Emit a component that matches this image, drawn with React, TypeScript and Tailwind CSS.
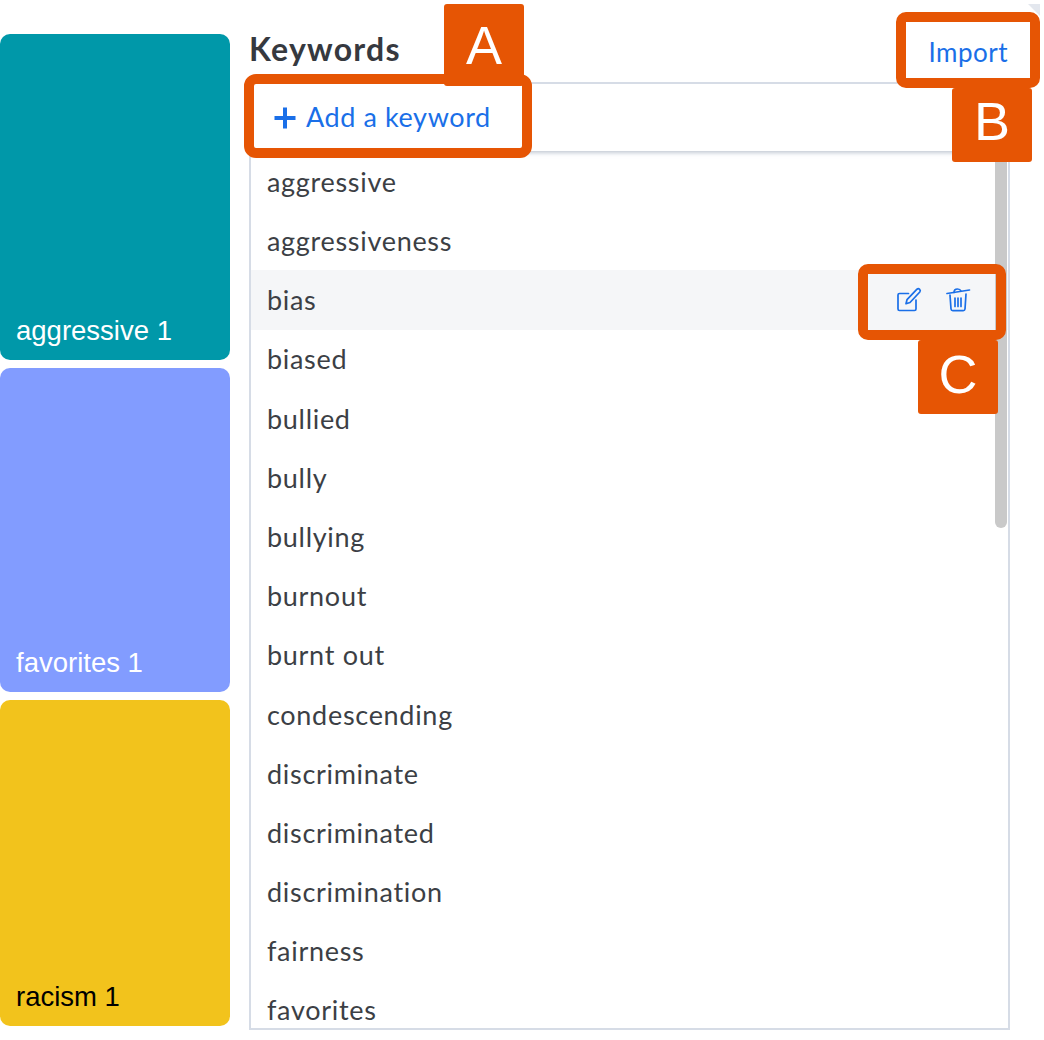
const keywords = ["aggressive","aggressiveness","bias","biased","bullied","bully","bullying","burnout","burnt out","condescending","discriminate","discriminated","discrimination","fairness","favorites"];

function Tile({ label, className, text }: { label: string; className: string; text: string }) {
  return (
    <div className={`flex items-end rounded-[10px] px-4 pb-[13px] font-['Liberation_Sans',sans-serif] text-[27.5px] leading-[32px] ${className} ${text}`}>
      {label}
    </div>
  );
}

function Label({ children, className }: { children: string; className: string }) {
  return (
    <div className={`absolute flex w-[80px] items-center justify-center rounded-[3px] bg-[#e65504] font-['Liberation_Sans',sans-serif] text-[54px] text-white ${className}`}>
      {children}
    </div>
  );
}

function Pen() {
  return (
    <svg width="26" height="26" viewBox="0 0 26 26" fill="none" stroke="#1a6fe8" strokeWidth="1.7" strokeLinecap="round" strokeLinejoin="round">
      <path d="M12.5 6.5H3.5a1.5 1.5 0 0 0-1.5 1.5v14a1.5 1.5 0 0 0 1.5 1.5h15a1.5 1.5 0 0 0 1.5-1.5v-9" />
      <path d="M21 2.2a2 2 0 0 1 2.8 2.8L14 15.5l-4 1.2 1-4z" />
    </svg>
  );
}

function Trash() {
  return (
    <svg width="26" height="26" viewBox="0 0 26 26" fill="none" stroke="#1a6fe8" strokeWidth="1.7" strokeLinecap="round" strokeLinejoin="round">
      <path d="M2 6.5 24.5 3" />
      <path d="M9 5.5c0-2.5 1.5-3.5 3.5-3.5s3 .8 3.5 2" />
      <path d="M5 8l1 14a1.8 1.8 0 0 0 1.8 1.6h10.4A1.8 1.8 0 0 0 20 22l1-15" />
      <path d="M10 11v8.5M13 11v8.5M16 11v8.5" />
    </svg>
  );
}

export default function App() {
  return (
    <div className="relative flex h-[1040px] w-[1044px] overflow-hidden bg-white">
      <div className="flex w-[230px] flex-col gap-2 pt-[34px]">
        <Tile label="aggressive 1" className="h-[326px] bg-[#0098a9]" text="text-white" />
        <Tile label="favorites 1" className="h-[324px] bg-[#829cff]" text="text-white" />
        <Tile label="racism 1" className="h-[326px] bg-[#f2c31c]" text="text-black" />
      </div>

      <div className="ml-[19px] flex w-[761px] flex-col font-['Lato',sans-serif]">
        <div className="flex h-[82px] items-start justify-between">
          <span className="mt-[29px] text-[32px] leading-[40px] font-bold tracking-[1.25px] text-[#36393f]">Keywords</span>
          <span className="mt-[35px] mr-[2px] text-[26px] leading-[34px] tracking-[0.5px] text-[#1a6fe8]">Import</span>
        </div>
        <div className="relative h-[948px] overflow-hidden border-2 border-[#d6dce6]">
          <div className="flex h-[67px] items-center gap-[9px] pl-[22px] text-[27px] tracking-[0.6px] text-[#1a6fe8] shadow-[0_2px_4px_rgba(170,180,195,0.7)]">
            <svg width="24" height="24" viewBox="0 0 24 24" fill="none" stroke="#1a6fe8" strokeWidth="4">
              <path d="M12 1.5v21M1.5 12h21" />
            </svg>
            Add a keyword
          </div>
          <div className="flex flex-col pt-[1px]">
            {keywords.map((k) => (
              <div
                key={k}
                className={`flex h-[59.2px] shrink-0 items-center justify-between pt-[1px] pl-[16px] text-[27px] tracking-[0.7px] text-[#3c3f45] ${k === "bias" ? "bg-[#f5f6f8]" : ""}`}
              >
                {k}
                {k === "bias" && (
                  <div className="mr-[37px] flex gap-[23px]">
                    <Pen />
                    <Trash />
                  </div>
                )}
              </div>
            ))}
          </div>
          <div className="absolute top-[60px] right-[1px] h-[384px] w-[12px] rounded-full bg-[#c9c9c9]" />
        </div>
      </div>

      <div className="absolute top-[74px] left-[244px] h-[84px] w-[288px] rounded-[12px] border-[10px] border-[#e65504]" />
      <Label className="top-[4px] left-[444px] h-[82px]">A</Label>
      <svg className="absolute top-[4px] left-[1028px]" width="12" height="12" viewBox="0 0 12 12">
        <path d="M0 0H12V12z" fill="#e3e7ee" />
      </svg>
      <div className="absolute top-[12px] left-[896px] h-[76px] w-[144px] rounded-[10px] border-[10px] border-[#e65504]" />
      <Label className="top-[88px] left-[952px] h-[74px] pb-[7px]">B</Label>
      <div className="absolute top-[264px] left-[858px] h-[76px] w-[148px] rounded-[10px] border-[10px] border-[#e65504]" />
      <Label className="top-[340px] left-[918px] h-[74px] pb-[5px]">C</Label>
    </div>
  );
}
